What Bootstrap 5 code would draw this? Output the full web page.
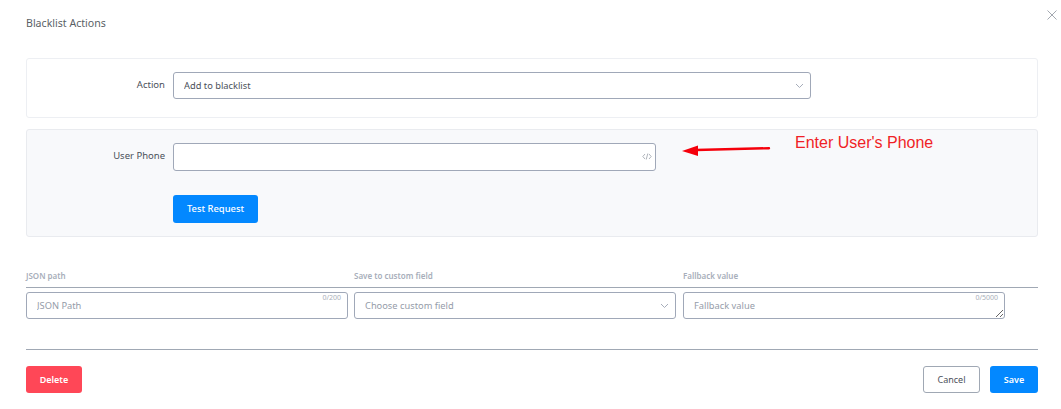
<!DOCTYPE html>
<html lang="en">
<head>
<meta charset="utf-8">
<title>Blacklist Actions</title>
<link href="https://cdn.jsdelivr.net/npm/bootstrap@5.3.0/dist/css/bootstrap.min.css" rel="stylesheet">
<style>
html,body{height:409px;overflow:hidden;background:#fff}
body{font-family:"Noto Sans",sans-serif;font-size:9.3px;color:#40464f;position:relative}
.sheet{padding:15px 23px 0 26px}
.sheet-title{font-size:10.600px;line-height:16px;color:#5a5f66;margin:0 0 27px}
.x-btn{position:absolute;top:9px;right:3px;width:12px;height:12px;padding:0;border:0;background:none;display:flex}
.panel{border:1px solid #edeff3;border-radius:3px;display:flex;gap:8px;margin-bottom:11px}
.panel-one{height:60px;padding-top:13px}
.panel-two{height:108px;padding-top:13px;background:#f8f9fb;border-color:#e9ebef;margin-bottom:33px}
.lbl{width:138px;text-align:right;font-size:9.500px;line-height:26px;color:#4a505a;margin:0;flex:none}
.field{border:1px solid #a0a8b8;border-radius:3px;background-color:#fff;font-size:9.300px;color:#4a505a;box-shadow:none;height:27px;padding:0 10px;display:block}
.field:focus{border-color:#a0a8b8;box-shadow:none}
.field::placeholder{color:#959ca9;opacity:1}
.chev{background-image:url("data:image/svg+xml,%3Csvg xmlns='http://www.w3.org/2000/svg' width='9' height='6' viewBox='0 0 9 6'%3E%3Cpath d='M1 1l3.500 3.500L8 1' fill='none' stroke='%23a6adba'/%3E%3C/svg%3E");background-repeat:no-repeat;background-position:right 6px center;background-size:9px 6px;padding-right:24px}
.chev-muted{color:#959ca9}
.act-field{width:638px;height:27px}
.phone-wrap{position:relative;width:483px;height:28px}
.phone-wrap .field{width:100%;height:28px}
.code-mark{position:absolute;right:4px;top:9px;width:10px;height:9px;display:flex}
.test-btn{background:#0388ff;border:0;color:#fff;font-size:9.400px;font-weight:500;width:85px;height:28px;border-radius:3px;padding:0;margin-top:24px;display:block}
.test-btn:hover{background:#0388ff;color:#fff}
.map-row{display:flex;gap:6px;border-bottom:1px solid #a0a8b4;height:18px}
.map-row span{width:322px;font-size:8px;font-weight:600;line-height:12px;color:#a7aeba;flex:none}
.map-row span+span+span{margin-left:1px}
.map-fields{display:flex;gap:6px;margin-top:4px}
.map-cell{position:relative;width:322px;flex:none}
.map-cell+.map-cell+.map-cell{margin-left:1px}
.map-cell .field{width:100%;height:27px}
.count{position:absolute;right:7px;top:1px;font-size:7px;line-height:9px;color:#a9afba;pointer-events:none}
textarea.field{padding-top:6px;line-height:14px;resize:vertical;min-height:0}
.bar{display:flex;justify-content:space-between;border-top:1px solid #a0a8b4;margin-top:30px;padding-top:16px}
.bar .btn{font-size:9px;height:27px;border-radius:3px;padding:0;font-weight:600;line-height:1}
.bar-right{display:flex;gap:10px}
.del-btn{background:#ff4757;border:0;color:#fff;width:56px}
.del-btn:hover{background:#ff4757;color:#fff}
.cancel-btn{background:#fff;border:1px solid #a0a8b4;color:#4a505a;width:57px;font-weight:400!important}
.save-btn{background:#0388ff;border:0;color:#fff;width:48px}
.save-btn:hover{background:#0388ff;color:#fff}
.note{position:absolute;left:795px;top:134px;font-family:"Liberation Sans",Arial,sans-serif;font-size:16px;line-height:18px;color:#f01f26;white-space:nowrap}
.arrow{position:absolute;left:680px;top:143px;width:92px;height:14px}
</style>
</head>
<body>
<div class="sheet">
  <h5 class="sheet-title fw-normal">Blacklist Actions</h5>
  <button type="button" class="x-btn" aria-label="Close"><svg width="12" height="12" viewBox="0 0 12 12"><path d="M1.500 1.500l9 9M10.500 1.500l-9 9" stroke="#a3a8b0" stroke-width="1" fill="none"/></svg></button>

  <div class="panel panel-one">
    <label class="lbl">Action</label>
    <select class="form-select field chev act-field"><option>Add to blacklist</option></select>
  </div>

  <div class="panel panel-two">
    <label class="lbl">User Phone</label>
    <div>
      <div class="phone-wrap">
        <input class="form-control field" type="text">
        <span class="code-mark"><svg width="10" height="9" viewBox="0 0 10 9"><path d="M3 2L.8 4.500 3 7M7 2l2.200 2.500L7 7M5.800 1.500L4.200 7.500" fill="none" stroke="#a6abb3" stroke-width=".9"/></svg></span>
      </div>
      <button type="button" class="btn test-btn">Test Request</button>
    </div>
  </div>

  <div class="map-row"><span>JSON path</span><span>Save to custom field</span><span>Fallback value</span></div>
  <div class="map-fields">
    <div class="map-cell"><input class="form-control field" type="text" placeholder="JSON Path"><span class="count">0/200</span></div>
    <div class="map-cell"><select class="form-select field chev chev-muted"><option>Choose custom field</option></select></div>
    <div class="map-cell"><textarea class="form-control field" placeholder="Fallback value"></textarea><span class="count">0/5000</span></div>
  </div>

  <div class="bar">
    <button type="button" class="btn del-btn">Delete</button>
    <div class="bar-right">
      <button type="button" class="btn cancel-btn">Cancel</button>
      <button type="button" class="btn save-btn">Save</button>
    </div>
  </div>
</div>
<div class="note">Enter User's Phone</div>
<svg class="arrow" viewBox="0 0 92 14"><path d="M89 5.200L16 7" stroke="#f5000b" stroke-width="2.400" fill="none" stroke-linecap="round"/><path d="M2 8L18 2.500V13z" fill="#f5000b"/></svg>
<script src="https://cdn.jsdelivr.net/npm/bootstrap@5.3.0/dist/js/bootstrap.bundle.min.js"></script>
</body>
</html>
